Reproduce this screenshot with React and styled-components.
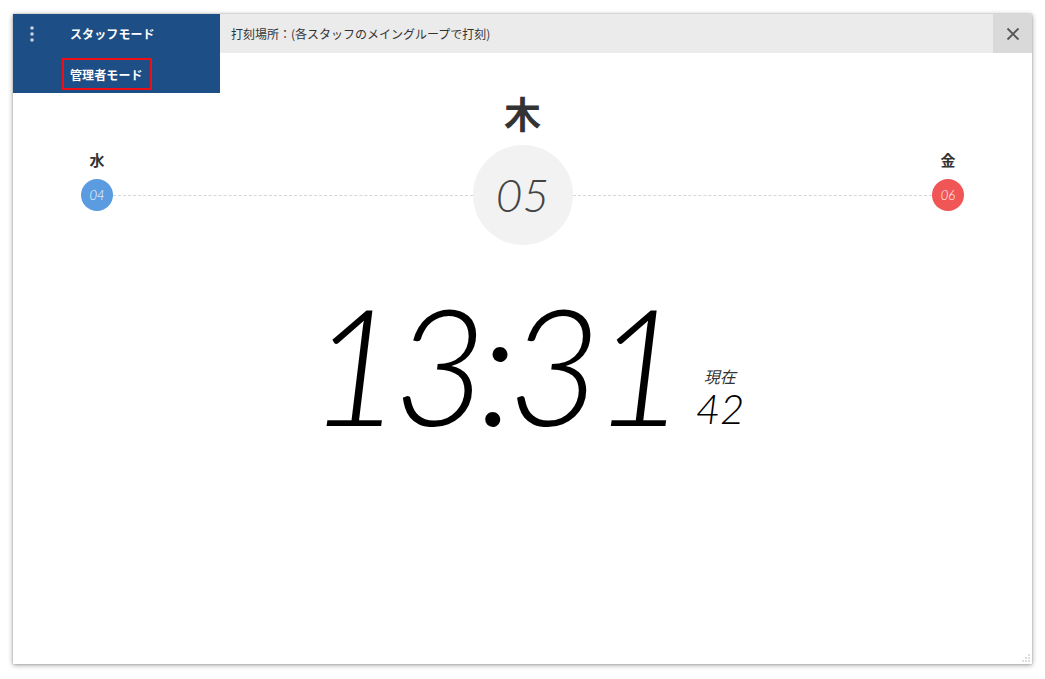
import React from "react";
import styled, { createGlobalStyle } from "styled-components";

const Global = createGlobalStyle`
  html, body { margin: 0; padding: 0; background: #ffffff; }
  body { font-family: "Noto Sans CJK JP", "Noto Sans", sans-serif; }
  * { box-sizing: border-box; }
`;

const Page = styled.div`
  width: 1045px;
  height: 679px;
  padding: 14px 13px 0 13px;
`;

const Window = styled.div`
  position: relative;
  width: 1019px;
  height: 650px;
  background: #fff;
  box-shadow: 0 1px 5px rgba(0, 0, 0, 0.4), 0 0 1px rgba(0, 0, 0, 0.3);
  display: flex;
  flex-direction: column;
`;

const Header = styled.div`
  position: relative;
  display: flex;
  height: 39px;
  flex: none;
`;

const ModeMenu = styled.div`
  position: relative;
  width: 207px;
  height: 39px;
  background: #1e4e86;
  display: flex;
  align-items: center;
  z-index: 2;
`;

const Dots = styled.div`
  width: 57px;
  padding-left: 17px;
  display: flex;
  align-items: center;
`;

const ModeLabel = styled.span`
  color: #fff;
  font-size: 12px;
  font-weight: 700;
  letter-spacing: 0.1px;
`;

const Dropdown = styled.div`
  position: absolute;
  top: 39px;
  left: 0;
  width: 207px;
  height: 40px;
  background: #1e4e86;
  padding: 5px 0 0 49px;
`;

const ActiveOption = styled.div`
  width: 90px;
  height: 32px;
  border: 2px solid #ee0f16;
  display: flex;
  align-items: center;
  padding-left: 6px;
`;

const TopBar = styled.div`
  flex: 1;
  background: #ebebeb;
  display: flex;
  align-items: center;
  padding-left: 11px;
  font-size: 12px;
  color: #333;
`;

const Place = styled.span`
  flex: 1;
`;

const CloseButton = styled.button`
  width: 39px;
  height: 39px;
  border: none;
  background: #d9d9d9;
  display: flex;
  align-items: center;
  justify-content: center;
  padding: 0;
`;

const Content = styled.div`
  flex: 1;
  display: flex;
  flex-direction: column;
  padding-top: 40px;
`;

const DayRow = styled.div`
  display: flex;
  align-items: flex-start;
  padding: 0 68px;
`;

const DayItem = styled.div`
  display: flex;
  flex-direction: column;
  align-items: center;
  margin-top: ${(p) => (p.$today ? 0 : 59)}px;
  width: ${(p) => (p.$today ? 100 : 32)}px;
`;

const DayLabel = styled.div`
  font-weight: 700;
  color: #333;
  font-size: ${(p) => (p.$today ? 37 : 15)}px;
  line-height: ${(p) => (p.$today ? 40 : 16)}px;
  margin-bottom: ${(p) => (p.$today ? 12 : 11)}px;
  white-space: nowrap;
`;

const DateCircle = styled.div`
  width: ${(p) => p.$size}px;
  height: ${(p) => p.$size}px;
  border-radius: 50%;
  background: ${(p) => p.$bg};
  color: ${(p) => p.$fg};
  display: flex;
  align-items: center;
  justify-content: center;
  font-family: "Lato", sans-serif;
  font-style: italic;
  font-weight: 300;
  font-size: ${(p) => p.$font}px;
  line-height: 1;
`;

const Connector = styled.div`
  flex: 1;
  margin-top: 102px;
  border-top: 1px dashed #d6d6d6;
`;

const ClockRow = styled.div`
  display: flex;
  justify-content: center;
  align-items: flex-end;
  margin-top: 44px;
  padding-left: 8px;
`;

const Time = styled.div`
  font-family: "Lato", sans-serif;
  font-style: italic;
  font-weight: 300;
  font-size: 162px;
  line-height: 150px;
  letter-spacing: -9px;
  color: #000;
`;

const Seconds = styled.div`
  display: flex;
  flex-direction: column;
  margin-left: 18px;
  margin-bottom: 10px;
`;

const NowLabel = styled.div`
  font-size: 16px;
  font-style: italic;
  color: #333;
  line-height: 16px;
  padding-left: 8px;
  margin-bottom: 4px;
`;

const SecValue = styled.div`
  font-family: "Lato", sans-serif;
  font-style: italic;
  font-weight: 300;
  font-size: 42px;
  line-height: 41px;
  color: #000;
`;

const Grip = styled.svg`
  position: absolute;
  right: 2px;
  bottom: 2px;
`;

export default function App() {
  return (
    <Page>
      <Global />
      <Window>
        <Header>
          <ModeMenu>
            <Dots>
              <svg width="4" height="16" viewBox="0 0 4 16">
                <circle cx="2" cy="2" r="1.8" fill="#c9d3df" />
                <circle cx="2" cy="8" r="1.8" fill="#c9d3df" />
                <circle cx="2" cy="14" r="1.8" fill="#c9d3df" />
              </svg>
            </Dots>
            <ModeLabel>スタッフモード</ModeLabel>
            <Dropdown>
              <ActiveOption>
                <ModeLabel>管理者モード</ModeLabel>
              </ActiveOption>
            </Dropdown>
          </ModeMenu>
          <TopBar>
            <Place>打刻場所：(各スタッフのメイングループで打刻)</Place>
            <CloseButton aria-label="close">
              <svg width="14" height="14" viewBox="0 0 14 14">
                <path d="M1.5 1.5 L12.5 12.5 M12.5 1.5 L1.5 12.5" stroke="#555" strokeWidth="1.8" />
              </svg>
            </CloseButton>
          </TopBar>
        </Header>
        <Content>
          <DayRow>
            <DayItem>
              <DayLabel>水</DayLabel>
              <DateCircle $size={32} $bg="#5b9be0" $fg="#fff" $font={13}>04</DateCircle>
            </DayItem>
            <Connector />
            <DayItem $today>
              <DayLabel $today>木</DayLabel>
              <DateCircle $size={100} $bg="#f2f2f2" $fg="#444" $font={46}>05</DateCircle>
            </DayItem>
            <Connector />
            <DayItem>
              <DayLabel>金</DayLabel>
              <DateCircle $size={32} $bg="#f05656" $fg="#fff" $font={13}>06</DateCircle>
            </DayItem>
          </DayRow>
          <ClockRow>
            <Time>13:31</Time>
            <Seconds>
              <NowLabel>現在</NowLabel>
              <SecValue>42</SecValue>
            </Seconds>
          </ClockRow>
        </Content>
        <Grip width="10" height="10" viewBox="0 0 10 10">
          <rect x="8" y="2" width="2" height="2" fill="#ddd" />
          <rect x="5" y="5" width="2" height="2" fill="#ddd" />
          <rect x="8" y="5" width="2" height="2" fill="#ddd" />
          <rect x="2" y="8" width="2" height="2" fill="#ddd" />
          <rect x="5" y="8" width="2" height="2" fill="#ddd" />
          <rect x="8" y="8" width="2" height="2" fill="#ddd" />
        </Grip>
      </Window>
    </Page>
  );
}
